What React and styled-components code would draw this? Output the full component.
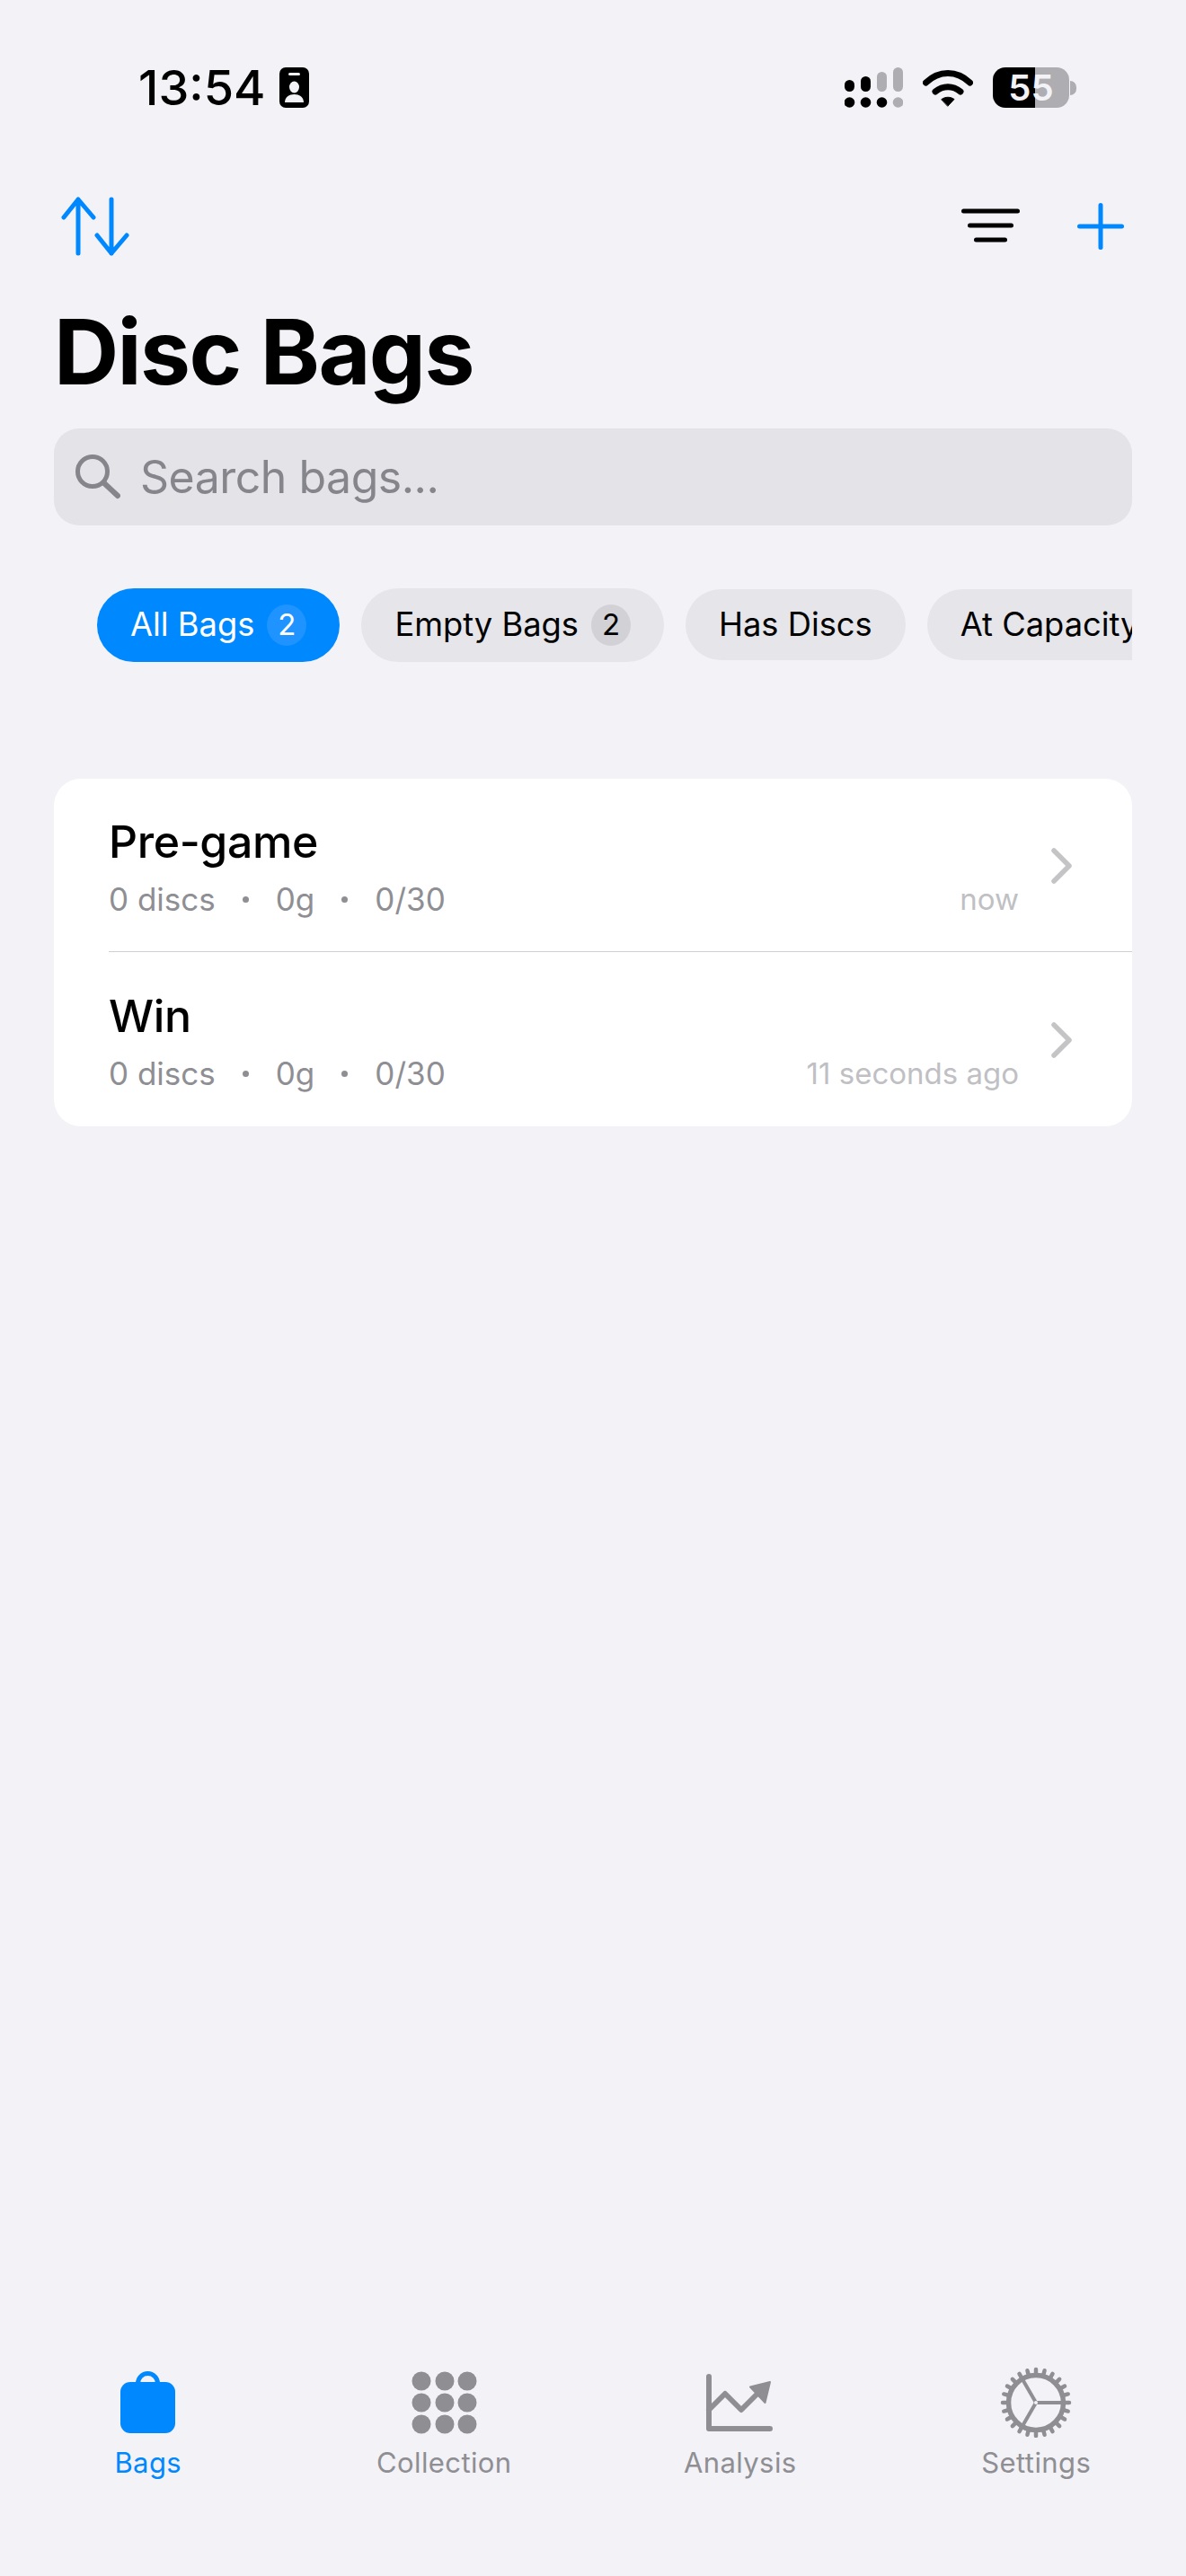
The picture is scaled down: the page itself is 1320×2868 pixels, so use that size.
import React from 'react';
import styled, { createGlobalStyle } from 'styled-components';

const Global = createGlobalStyle`
  html, body {
    margin: 0;
    padding: 0;
    background: #f2f2f7;
    font-family: 'Inter', 'Liberation Sans', sans-serif;
  }
  * { box-sizing: border-box; }
`;

const Page = styled.div`
  display: flex;
  flex-direction: column;
  width: 1320px;
  height: 2868px;
  overflow: hidden;
  background: #f2f2f7;
`;

const StatusBar = styled.div`
  display: flex;
  align-items: center;
  justify-content: space-between;
  height: 47px;
  margin-top: 74px;
  padding: 0 122px 0 154px;
`;

const StatusLeft = styled.div`
  display: flex;
  align-items: center;
  gap: 16px;
`;

const StatusRight = styled.div`
  display: flex;
  align-items: center;
  gap: 22px;
`;

const Clock = styled.span`
  font-size: 54px;
  font-weight: 500;
  line-height: 47px;
  color: #000;
`;

const BatteryWrap = styled.div`
  display: flex;
  align-items: center;
  gap: 1px;
`;

const BatteryBody = styled.div`
  display: flex;
  align-items: center;
  justify-content: center;
  width: 85px;
  height: 45px;
  border-radius: 14px;
  background: linear-gradient(to right, #000 55%, #aeaeb2 55%);
  color: #f2f2f7;
  font-size: 40px;
  font-weight: 600;
`;

const BatteryNub = styled.div`
  width: 7px;
  height: 16px;
  border-radius: 0 8px 8px 0;
  background: #aeaeb2;
`;

const Main = styled.main`
  display: flex;
  flex-direction: column;
  padding: 0 60px;
`;

const Toolbar = styled.div`
  display: flex;
  align-items: center;
  justify-content: space-between;
  height: 66px;
  margin-top: 98px;
  padding: 0 9px 0 8px;
`;

const ToolGroup = styled.div`
  display: flex;
  align-items: center;
  gap: 64px;
`;

const Title = styled.h1`
  margin: 52px 0 0;
  font-size: 100px;
  line-height: 110px;
  font-weight: 700;
  letter-spacing: -1.6px;
  color: #000;
`;

const SearchBar = styled.div`
  display: flex;
  align-items: center;
  gap: 22px;
  height: 108px;
  margin-top: 30px;
  padding: 0 24px;
  border-radius: 28px;
  background: #e3e3e8;
`;

const Placeholder = styled.span`
  font-size: 50px;
  letter-spacing: -0.5px;
  color: #85858b;
`;

const ChipRow = styled.div`
  display: flex;
  align-items: center;
  gap: 24px;
  height: 83px;
  margin-top: 69px;
  padding-left: 48px;
  overflow: hidden;
`;

const Chip = styled.div`
  display: flex;
  flex-shrink: 0;
  align-items: center;
  gap: 14px;
  padding: 18px 37px;
  border-radius: 42px;
  background: ${p => (p.$active ? '#0088ff' : '#e5e5ea')};
  color: ${p => (p.$active ? '#fff' : '#000')};
  font-size: 36.300px;
  line-height: 43px;
`;

const Badge = styled.span`
  display: flex;
  align-items: center;
  justify-content: center;
  width: 44px;
  height: 46px;
  border-radius: 50%;
  background: ${p => (p.$active ? '#1f93ff' : '#d1d1d6')};
  font-size: 33px;
`;

const Card = styled.section`
  margin-top: 130px;
  border-radius: 30px;
  background: #fff;
  overflow: hidden;
`;

const Row = styled.div`
  display: flex;
  align-items: center;
  height: ${p => (p.$first ? 193 : 194)}px;
  margin-left: 61px;
  padding-right: 66px;
  border-bottom: ${p => (p.$first ? '1.5px solid #cfcfd3' : 'none')};
`;

const RowBody = styled.div`
  display: flex;
  flex: 1;
  flex-direction: column;
  gap: 12px;
  margin-top: 4px;
`;

const RowName = styled.div`
  font-size: 50px;
  font-weight: 500;
  line-height: 60px;
  letter-spacing: -0.4px;
  color: #000;
`;

const RowMeta = styled.div`
  display: flex;
  align-items: center;
  justify-content: space-between;
  font-size: 35px;
  line-height: 44px;
  color: #8e8e93;
`;

const MetaGroup = styled.div`
  display: flex;
  align-items: center;
  gap: 30px;
`;

const MetaDot = styled.span`
  width: 7px;
  height: 7px;
  border-radius: 50%;
  background: #8e8e93;
`;

const RowTime = styled.span`
  font-size: 33px;
  color: #c0c0c4;
`;

const ChevronWrap = styled.div`
  display: flex;
  margin-left: 36px;
  margin-top: 2px;
`;

const TabBar = styled.nav`
  display: grid;
  grid-template-columns: repeat(4, 1fr);
  margin-top: auto;
  padding: 0 2px 106px 0;
`;

const Tab = styled.div`
  display: flex;
  flex-direction: column;
  align-items: center;
  gap: 8px;
  color: ${p => (p.$active ? '#0088ff' : '#8e8e93')};
  font-size: 31px;
  line-height: 40px;
  letter-spacing: 0.4px;
`;

const TabIcon = styled.svg`
  display: block;
  width: 84px;
  height: 84px;
`;

function IdIcon() {
  return (
    <svg width="33" height="45" viewBox="0 0 33 45">
      <rect width="33" height="45" rx="7" fill="#000" />
      <rect x="10" y="6" width="13" height="3" rx="1.5" fill="#f2f2f7" />
      <ellipse cx="16.5" cy="22" rx="5.5" ry="6.5" fill="#f2f2f7" />
      <path d="M6 39c0-6 5-9 10.500-9S27 33 27 39z" fill="#f2f2f7" />
    </svg>
  );
}

function SignalIcon() {
  const bars = [
    { x: 0, y: 14, h: 13, c: '#000' },
    { x: 18, y: 10, h: 17, c: '#000' },
    { x: 36, y: 5, h: 22, c: '#aeaeb2' },
    { x: 54, y: 0, h: 27, c: '#aeaeb2' }
  ];
  return (
    <svg width="65" height="45" viewBox="0 0 65 45">
      {bars.map(b => (
        <rect key={b.x} x={b.x} y={b.y} width="11" height={b.h} rx="5.500" fill={b.c} />
      ))}
      {bars.map((b, i) => (
        <circle key={b.x} cx={b.x + 5.5} cy="39" r="5.800" fill={i === 3 ? '#aeaeb2' : '#000'} />
      ))}
    </svg>
  );
}

function WifiIcon() {
  return (
    <svg width="56" height="42" viewBox="0 0 56 42" fill="none" stroke="#000" strokeWidth="7" strokeLinecap="round">
      <path d="M3.500 15C18 1 38 1 52.500 15" />
      <path d="M14 25c8.500-7 19.500-7 28 0" />
      <path d="M21 33.500c4-3 10-3 14 0L28 41z" fill="#000" stroke="#000" strokeWidth="1" strokeLinejoin="round" />
    </svg>
  );
}

function SortIcon() {
  return (
    <svg width="76" height="66" viewBox="0 0 76 66" fill="none" stroke="#0088ff" strokeWidth="5" strokeLinecap="round" strokeLinejoin="round">
      <path d="M19 3v60M3 23 19 3l17 20" />
      <path d="M56 3v60M40 43l16 20 17-20" />
    </svg>
  );
}

function FilterIcon() {
  return (
    <svg width="65" height="40" viewBox="0 0 65 40" fill="none" stroke="#000" strokeWidth="5" strokeLinecap="round">
      <path d="M2.500 3h60M9.500 19h46M16.500 35h32" />
    </svg>
  );
}

function PlusIcon() {
  return (
    <svg width="52" height="52" viewBox="0 0 52 52" fill="none" stroke="#0088ff" strokeWidth="5" strokeLinecap="round">
      <path d="M26 2.500v47M2.500 26h47" />
    </svg>
  );
}

function SearchIcon() {
  return (
    <svg width="50" height="50" viewBox="0 0 50 50" fill="none" stroke="#85858b" strokeWidth="5" strokeLinecap="round">
      <circle cx="19" cy="19" r="16.500" />
      <path d="M32 32 47 46" strokeWidth="6" />
    </svg>
  );
}

function Chevron() {
  return (
    <svg width="24" height="40" viewBox="0 0 24 40" fill="none" stroke="#c4c4c7" strokeWidth="5.500" strokeLinecap="round" strokeLinejoin="round">
      <path d="M3 3l17 17L3 37" />
    </svg>
  );
}

function BagTab() {
  return (
    <TabIcon viewBox="0 0 84 84" fill="none">
      <path d="M30.500 24v-0.500a11 11 0 0 1 22 0V24" stroke="#0088ff" strokeWidth="5" />
      <rect x="11" y="22" width="61" height="57" rx="11" fill="#0088ff" />
    </TabIcon>
  );
}

function GridTab() {
  const xs = [17, 43, 68];
  const ys = [21, 45, 69];
  return (
    <TabIcon viewBox="0 0 84 84" fill="#8e8e93">
      {ys.map(y => xs.map(x => <circle key={`${x}-${y}`} cx={x} cy={y} r="10.500" />))}
    </TabIcon>
  );
}

function ChartTab() {
  return (
    <TabIcon viewBox="0 0 84 84" fill="none" stroke="#8e8e93" strokeWidth="6" strokeLinecap="round" strokeLinejoin="round">
      <path d="M7 16v58h68" />
      <path d="M7 53l18-18 18 18 21-21" />
      <path d="M75 22l-22 5.500 16.500 17.500z" fill="#8e8e93" strokeWidth="2" />
    </TabIcon>
  );
}

function GearTab() {
  const teeth = Array.from({ length: 24 }, (_, i) => (i * Math.PI) / 12);
  const spokes = [0, (2 * Math.PI) / 3, (4 * Math.PI) / 3];
  return (
    <TabIcon viewBox="0 0 84 84" fill="none" stroke="#8e8e93">
      <circle cx="42" cy="45" r="30.500" strokeWidth="5.500" />
      {teeth.map(a => (
        <line
          key={a}
          x1={42 + 31 * Math.cos(a)}
          y1={45 + 31 * Math.sin(a)}
          x2={42 + 37 * Math.cos(a)}
          y2={45 + 37 * Math.sin(a)}
          strokeWidth="4.500"
          strokeLinecap="round"
        />
      ))}
      {spokes.map(a => (
        <line key={a} x1="42" y1="45" x2={42 + 30 * Math.cos(a)} y2={45 + 30 * Math.sin(a)} strokeWidth="4" />
      ))}
      <circle cx="42" cy="45" r="2" fill="#f2f2f7" stroke="none" />
    </TabIcon>
  );
}

const chips = [
  { label: 'All Bags', count: 2, active: true },
  { label: 'Empty Bags', count: 2 },
  { label: 'Has Discs' },
  { label: 'At Capacity' }
];

const bags = [
  { name: 'Pre-game', time: 'now' },
  { name: 'Win', time: '11 seconds ago' }
];

const tabs = [
  { label: 'Bags', Icon: BagTab, active: true },
  { label: 'Collection', Icon: GridTab },
  { label: 'Analysis', Icon: ChartTab },
  { label: 'Settings', Icon: GearTab }
];

export default function App() {
  return (
    <Page>
      <Global />
      <StatusBar>
        <StatusLeft>
          <Clock>13:54</Clock>
          <IdIcon />
        </StatusLeft>
        <StatusRight>
          <SignalIcon />
          <WifiIcon />
          <BatteryWrap>
            <BatteryBody>55</BatteryBody>
            <BatteryNub />
          </BatteryWrap>
        </StatusRight>
      </StatusBar>

      <Main>
        <Toolbar>
          <SortIcon />
          <ToolGroup>
            <FilterIcon />
            <PlusIcon />
          </ToolGroup>
        </Toolbar>
        <Title>Disc Bags</Title>
        <SearchBar>
          <SearchIcon />
          <Placeholder>Search bags...</Placeholder>
        </SearchBar>
        <ChipRow>
          {chips.map(c => (
            <Chip key={c.label} $active={c.active}>
              {c.label}
              {c.count && <Badge $active={c.active}>{c.count}</Badge>}
            </Chip>
          ))}
        </ChipRow>
        <Card>
          {bags.map((b, i) => (
            <Row key={b.name} $first={i === 0}>
              <RowBody>
                <RowName>{b.name}</RowName>
                <RowMeta>
                  <MetaGroup>
                    <span>0 discs</span>
                    <MetaDot />
                    <span>0g</span>
                    <MetaDot />
                    <span>0/30</span>
                  </MetaGroup>
                  <RowTime>{b.time}</RowTime>
                </RowMeta>
              </RowBody>
              <ChevronWrap>
                <Chevron />
              </ChevronWrap>
            </Row>
          ))}
        </Card>
      </Main>

      <TabBar>
        {tabs.map(({ label, Icon, active }) => (
          <Tab key={label} $active={active}>
            <Icon />
            {label}
          </Tab>
        ))}
      </TabBar>
    </Page>
  );
}
